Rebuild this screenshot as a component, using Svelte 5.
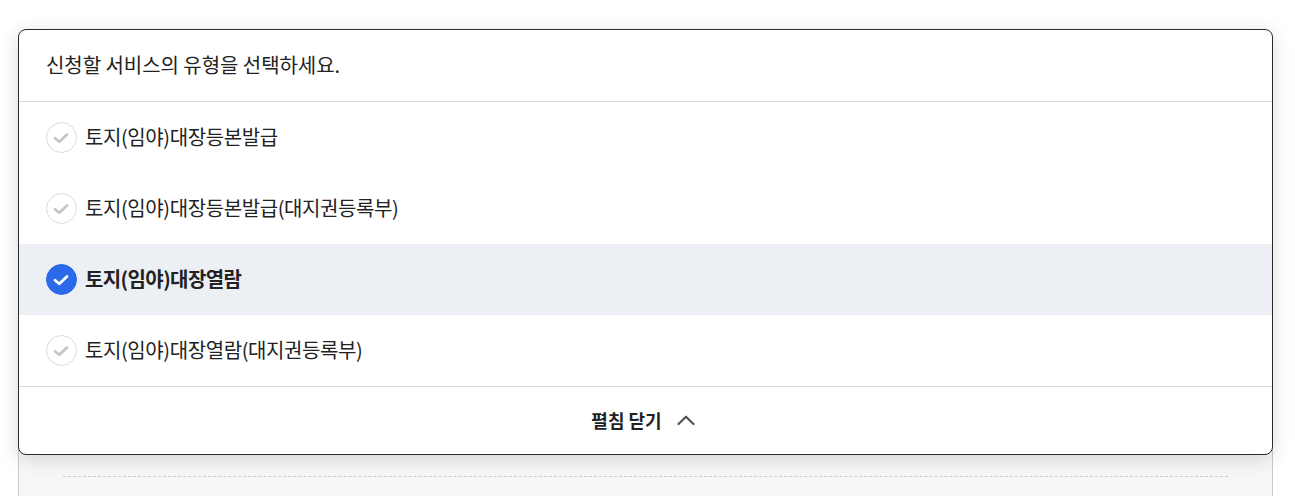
<script>
  const items = [
    { label: '토지(임야)대장등본발급', active: false },
    { label: '토지(임야)대장등본발급(대지권등록부)', active: false },
    { label: '토지(임야)대장열람', active: true },
    { label: '토지(임야)대장열람(대지권등록부)', active: false }
  ];
</script>

<div class="page">
  <div class="panel">
    <div class="dash"></div>
  </div>
  <div class="card">
    <div class="head">신청할 서비스의 유형을 선택하세요.</div>
    <ul class="list">
      {#each items as item}
        <li class="row" class:active={item.active}>
          <span class="check">
            <svg width="31" height="31" viewBox="0 0 31 31" fill="none">
              <path d="M9 16.2l4.3 3.6 7.7-7.4" />
            </svg>
          </span>
          <span class="label">{item.label}</span>
        </li>
      {/each}
    </ul>
    <div class="foot">
      <span class="foot-label">펼침 닫기</span>
      <svg class="chev" width="18" height="10" viewBox="0 0 18 10" fill="none">
        <path d="M1.5 9L9 1.7 16.5 9" />
      </svg>
    </div>
  </div>
</div>

<style>
  :global(body) {
    margin: 0;
    background: #fff;
    font-family: "Noto Sans CJK KR", "Noto Sans", sans-serif;
  }
  .page {
    position: relative;
    height: 496px;
    overflow: hidden;
    padding: 448px 22px 0 18px;
    box-sizing: border-box;
  }
  .panel {
    height: 48px;
    background: #f7f7f7;
    border-left: 1px solid #ccc;
    border-right: 1px solid #ccc;
    box-sizing: border-box;
    padding: 28px 44px 0;
  }
  .dash {
    border-top: 1px dashed #ccc;
  }
  .card {
    position: absolute;
    left: 18px;
    top: 29px;
    width: 1255px;
    box-sizing: border-box;
    background: #fff;
    border: 1px solid #2b2b2b;
    border-radius: 8px;
    box-shadow: 0 4px 20px rgba(0, 0, 0, 0.15);
    overflow: hidden;
  }
  .head {
    height: 72px;
    box-sizing: border-box;
    border-bottom: 1px solid #d9d9d9;
    padding: 0 0 3px 27px;
    display: flex;
    align-items: center;
    font-size: 20px;
    letter-spacing: -0.05px;
    color: #222;
  }
  .list {
    list-style: none;
    margin: 0;
    padding: 0;
  }
  .row {
    height: 71px;
    display: flex;
    align-items: center;
    padding-left: 27px;
    gap: 8px;
    font-size: 20px;
    letter-spacing: -0.4px;
    color: #222;
  }
  .label {
    padding-bottom: 2px;
  }
  .row.active {
    background: #eceff4;
    font-weight: 700;
    letter-spacing: -0.6px;
  }
  .check {
    width: 31px;
    height: 31px;
    border-radius: 50%;
    box-sizing: border-box;
    border: 1px solid #dcdcdc;
    background: #fff;
    position: relative;
    flex: none;
  }
  .check svg {
    position: absolute;
    left: -1px;
    top: -1px;
    stroke: #c6c6c6;
    stroke-width: 2.8;
    stroke-linecap: round;
    stroke-linejoin: round;
  }
  .active .check {
    background: #2a6ae9;
    border-color: #2a6ae9;
  }
  .active .check svg {
    stroke: #fff;
  }
  .foot {
    height: 68px;
    box-sizing: border-box;
    border-top: 1px solid #d9d9d9;
    padding: 0 5px 2px 0;
    display: flex;
    align-items: center;
    justify-content: center;
    gap: 15px;
    font-size: 18px;
    font-weight: 700;
    letter-spacing: 0;
    color: #222;
  }
  .chev {
    stroke: #555;
    stroke-width: 2.2;
    stroke-linecap: round;
    stroke-linejoin: round;
  }
</style>
